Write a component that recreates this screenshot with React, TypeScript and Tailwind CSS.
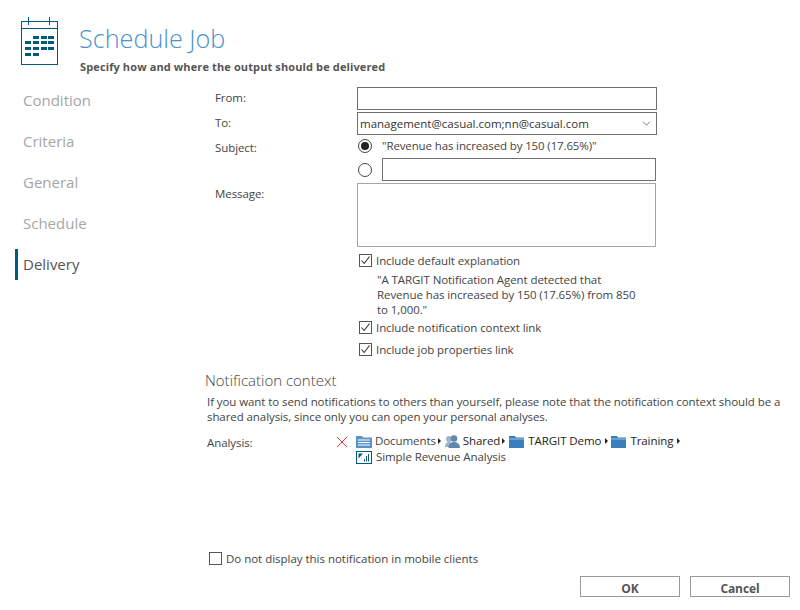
import { ChevronDown } from 'lucide-react';

const navItems = ['Condition', 'Criteria', 'General', 'Schedule', 'Delivery'];

function CalendarIcon() {
  const cells = [
    [12, 16], [20, 16], [27, 16],
    [4, 21], [12, 21], [20, 21], [27, 21],
    [4, 27], [12, 27], [20, 27], [27, 27],
    [4, 33], [12, 33],
  ];
  return (
    <svg width="38" height="48" viewBox="0 0 38 48" className="shrink-0">
      <rect x="0.5" y="4.5" width="36" height="43" fill="none" stroke="#005b7f" />
      <path d="M0 11.5H37M7.5 0V8M28.5 0V8" stroke="#005b7f" fill="none" />
      {cells.map(([x, y]) => (
        <rect key={`${x}-${y}`} x={x} y={y + 3} width="6" height="3" fill="#005b7f" />
      ))}
    </svg>
  );
}

function Checkbox({ checked = true }: { checked?: boolean }) {
  return (
    <span className="w-[13px] h-[13px] border border-[#555] flex items-center justify-center shrink-0">
      {checked && (
        <svg width="11" height="11" viewBox="0 0 11 11">
          <path d="M1.5 5.5L4.2 8.5L9.5 1.5" fill="none" stroke="#333" strokeWidth="1.1" />
        </svg>
      )}
    </span>
  );
}

function CheckRow({ label, className }: { label: string; className?: string }) {
  return (
    <div className={`flex items-center gap-[4px] h-[17px] text-[#444] ${className ?? ''}`}>
      <Checkbox />
      <span>{label}</span>
    </div>
  );
}

function Radio({ selected }: { selected?: boolean }) {
  return (
    <span className="w-[14px] h-[14px] rounded-full border border-[#444] flex items-center justify-center shrink-0">
      {selected && <span className="w-[8px] h-[8px] rounded-full bg-[#222]" />}
    </span>
  );
}

function Folder() {
  return (
    <svg width="15" height="13" viewBox="0 0 15 13" className="shrink-0">
      <path d="M0 1H6L7 2.5H15V13H0Z" fill="#3a7fbb" />
      <rect x="0" y="3.5" width="15" height="1" fill="#9cc3e2" />
    </svg>
  );
}

function DocumentsIcon() {
  return (
    <svg width="16" height="13" viewBox="0 0 16 13" className="shrink-0">
      <path d="M0 1H6L7 2.5H16V13H0Z" fill="#5b93c4" />
      <path d="M2 5H14M2 7.5H14M2 10H14" stroke="#fff" />
    </svg>
  );
}

function SharedIcon() {
  return (
    <svg width="15" height="13" viewBox="0 0 15 13" className="shrink-0">
      <circle cx="4" cy="4" r="3" fill="#9db4cc" />
      <path d="M0 12C0 8 2 7 4 7S8 8 8 12Z" fill="#9db4cc" />
      <circle cx="9" cy="3.5" r="3.3" fill="#5f88ae" />
      <path d="M3.5 13C3.5 8 7 7 9 7S15 8 15 13Z" fill="#5f88ae" />
    </svg>
  );
}

function AnalysisIcon() {
  return (
    <svg width="16" height="13" viewBox="0 0 16 13" className="shrink-0">
      <rect x="0.5" y="0.5" width="15" height="12" fill="#fff" stroke="#005b7f" />
      <path d="M2.5 2.5H7L2.5 7.5Z" fill="#005b7f" />
      <path d="M8.5 10.5V8M10.5 10.5V5M12.5 10.5V3" stroke="#005b7f" />
    </svg>
  );
}

function Crumb({ className }: { className: string }) {
  return <span className={`w-0 h-0 border-y-[3px] border-y-transparent border-l-[3px] border-l-[#222] shrink-0 ${className}`} />;
}

export default function App() {
  return (
    <div className="w-[800px] h-[610px] bg-white overflow-hidden flex flex-col font-['Open_Sans',sans-serif] text-[11.5px] tracking-[-0.08px] text-[#444]">
      <header className="flex h-[87px] pl-[21px] pt-[17px] shrink-0">
        <CalendarIcon />
        <div className="ml-[20px] flex flex-col">
          <h1 className="text-[25.2px] leading-[34px] mt-[4px] font-light tracking-normal text-[#4a93cc]">Schedule Job</h1>
          <p className="font-bold text-[#555] leading-[16px] mt-[4px] ml-[1px] text-[11px] tracking-[0.12px]">Specify how and where the output should be delivered</p>
        </div>
      </header>

      <div className="flex flex-1 min-h-0">
        <nav className="w-[205px] shrink-0 pl-[15px] -mt-[2px] flex flex-col">
          {navItems.map((item) => (
            <div
              key={item}
              className={`h-[31px] mb-[10px] flex items-center pl-[5px] text-[15px] tracking-normal border-l-[3px] ${
                item === 'Delivery' ? 'border-l-[#005b7f] text-[#555]' : 'border-l-transparent text-[#a6a6a6]'
              }`}
            >
              {item}
            </div>
          ))}
        </nav>

        <main className="flex-1 flex flex-col min-w-0">
          <div className="flex">
            <div className="w-[152px] pl-[10px] shrink-0 flex flex-col">
              <div className="h-[25px] leading-[22px]">From:</div>
              <div className="h-[25px] leading-[22px]">To:</div>
              <div className="h-[46px] leading-[22px]">Subject:</div>
              <div className="leading-[22px]">Message:</div>
            </div>
            <div className="w-[300px] flex flex-col">
              <div className="h-[23px] border border-[#707070] mb-[2px]" />
              <div className="h-[23px] border border-[#707070] flex items-center justify-between pl-[2px] pr-[3px] text-[#333] tracking-normal">
                <span>management@casual.com;nn@casual.com</span>
                <ChevronDown size={13} strokeWidth={1.25} className="text-[#333]" />
              </div>
              <div className="h-[21px] mb-[2px] flex items-center pl-[1px]">
                <Radio selected />
                <span className="ml-[10px] tracking-[-0.13px]">"Revenue has increased by 150 (17.65%)"</span>
              </div>
              <div className="h-[23px] flex items-center pl-[1px]">
                <Radio />
                <div className="ml-[10px] w-[274px] h-[23px] border border-[#707070]" />
              </div>
              <div className="h-[64px] w-[299px] mt-[2px] border border-[#a6a6a6]" />

              <div className="pl-[2px] mt-[5px] flex flex-col">
                <CheckRow label="Include default explanation" />
                <p className="ml-[18px] mt-[3px] leading-[15px] w-[260px]">
                  "A TARGIT Notification Agent detected that Revenue has increased by 150 (17.65%) from 850 to 1,000."
                </p>
                <CheckRow label="Include notification context link" className="mt-[2px]" />
                <CheckRow label="Include job properties link" className="mt-[5px]" />
              </div>
            </div>
          </div>

          <section className="mt-[12px]">
            <h2 className="text-[15px] leading-[20px] font-light tracking-normal text-[#444]">Notification context</h2>
            <p className="ml-[2px] mt-[4px] leading-[15px] text-[#444] w-[590px]">
              If you want to send notifications to others than yourself, please note that the notification context should be a shared analysis, since only you can open your personal analyses.
            </p>
            <div className="flex ml-[2px] mt-[11px]">
              <div className="w-[129px] shrink-0 leading-[16px]">Analysis:</div>
              <svg width="12" height="12" viewBox="0 0 12 12" className="shrink-0 mt-[1px]">
                <path d="M1 1L11 11M11 1L1 11" stroke="#d8413f" />
              </svg>
              <div className="ml-[8px] -mt-[2px] flex flex-col">
                <div className="flex items-center h-[16px] leading-[16px]">
                  <DocumentsIcon />
                  <span className="ml-[3px]">Documents</span>
                  <Crumb className="ml-[2px] mr-[4px]" />
                  <SharedIcon />
                  <span className="ml-[3px] text-[#222]">Shared</span>
                  <Crumb className="ml-[2px] mr-[4px]" />
                  <Folder />
                  <span className="ml-[4px] text-[#222]">TARGIT Demo</span>
                  <Crumb className="ml-[4px] mr-[3px]" />
                  <Folder />
                  <span className="ml-[4px] text-[#222]">Training</span>
                  <Crumb className="ml-[4px]" />
                </div>
                <div className="flex items-center h-[16px]">
                  <AnalysisIcon />
                  <span className="ml-[4px]">Simple Revenue Analysis</span>
                </div>
              </div>
            </div>
          </section>
        </main>
      </div>

      <footer className="h-[72px] shrink-0 flex flex-col">
        <div className="flex items-center gap-[4px] pl-[209px] mt-[12px]">
          <Checkbox checked={false} />
          <span className="tracking-[-0.02px]">Do not display this notification in mobile clients</span>
        </div>
        <div className="flex justify-end gap-[10px] pr-[10px] mt-[9px]">
          <button className="w-[100px] h-[21px] border border-[#999] pt-[4px] font-bold text-[12px] text-[#555] leading-none">OK</button>
          <button className="w-[100px] h-[21px] border border-[#999] pt-[4px] font-bold text-[12px] text-[#555] leading-none">Cancel</button>
        </div>
      </footer>
    </div>
  );
}
